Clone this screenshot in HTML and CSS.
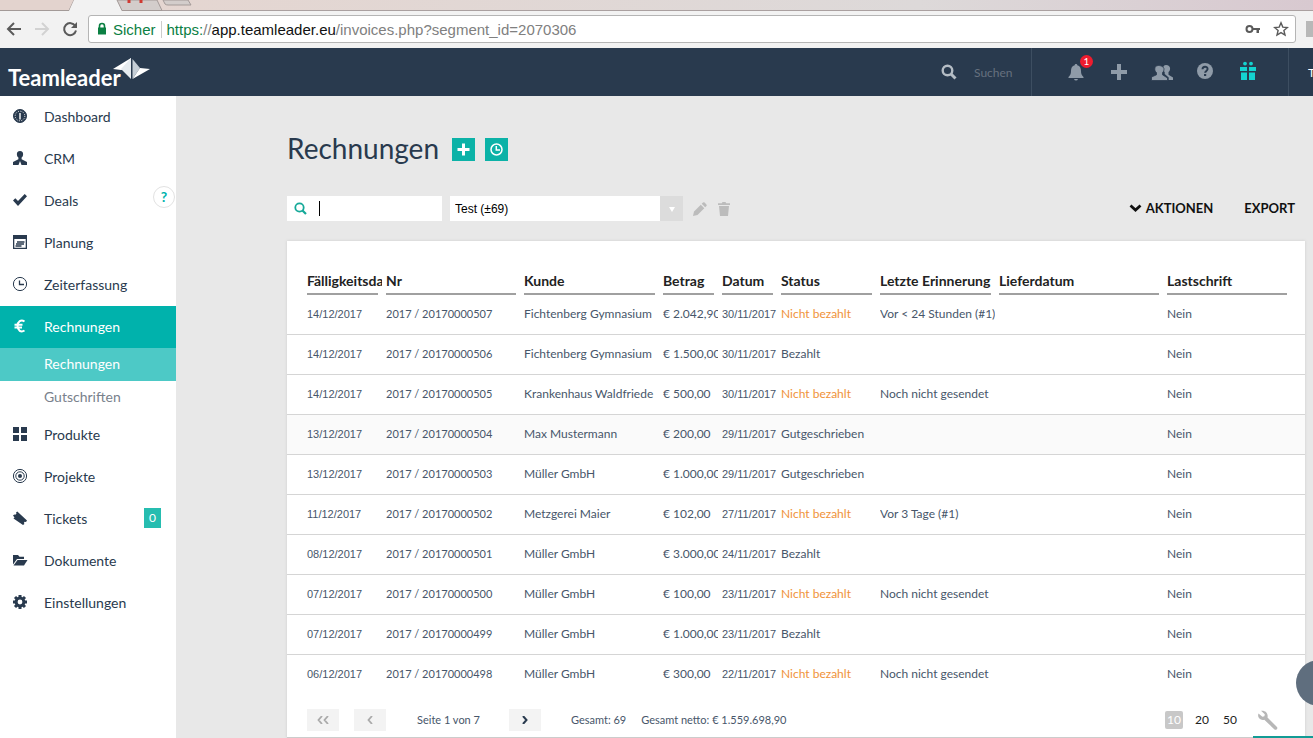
FILE: index.html
```html
<!DOCTYPE html>
<html lang="de">
<head>
    <meta charset="UTF-8">
    <meta name="viewport" content="width=device-width, initial-scale=1.0">
    <title>Rechnungen - Teamleader</title>
    <link rel="stylesheet" href="styles.css">
</head>
<body>
<!-- browser -->
<div class="browser">
    <div class="tabs">
        <svg width="600" height="11" viewBox="0 0 600 11">
            <path d="M0 0H74L69 10.500H0z" fill="#e3d3ce"/>
            <path d="M0 10.500H69L74 0" fill="none" stroke="#a39a98"/>
            <path d="M74 0H117L122 11H69z" fill="#f2f2f2"/>
            <path d="M117 0L122 10.500H162L157 0z" fill="#d3cdcb" stroke="#a39a98"/>
            <path d="M129 0v3M141 0v3" stroke="#d03a32" stroke-width="3"/>
            <path d="M163 0l2 4q1 1 3 1h23l-3-5z" fill="#d3cdcb" stroke="#a39a98"/>
        </svg>
    </div>
    <div class="toolbar">
        <button class="nav-btn" aria-label="Zurück"><svg width="16" height="16" viewBox="0 0 16 16"><path d="M15 8H2M8 2L2 8l6 6" fill="none" stroke="#5a5a5a" stroke-width="2"/></svg></button>
        <button class="nav-btn" aria-label="Vorwärts"><svg width="16" height="16" viewBox="0 0 16 16"><path d="M1 8h13M8 2l6 6-6 6" fill="none" stroke="#d2d2d2" stroke-width="2"/></svg></button>
        <button class="nav-btn" aria-label="Neu laden"><svg width="16" height="16" viewBox="0 0 16 16"><path d="M13.300 5A6 6 0 1 0 14 9.500" fill="none" stroke="#5a5a5a" stroke-width="2"/><path d="M15 1v6H9z" fill="#5a5a5a"/></svg></button>
        <div class="address">
            <svg width="10" height="14" viewBox="0 0 10 14"><path d="M2.500 6V4a2.500 2.500 0 0 1 5 0v2" fill="none" stroke="#0b8043" stroke-width="1.600"/><path d="M1 5.500h8v7H1z" fill="#0b8043"/></svg>
            <span class="secure">Sicher</span>
            <span class="url"><span class="scheme">https:</span>//<b>app.teamleader.eu</b>/invoices.php?segment_id=2070306</span>
            <svg width="16" height="12" viewBox="0 0 16 12"><circle cx="4.500" cy="6" r="3" fill="none" stroke="#5a5a5a" stroke-width="2"/><path d="M7 5h8v2h-1v3h-2.500V7H7z" fill="#5a5a5a"/></svg>
            <svg width="16" height="16" viewBox="0 0 16 16"><path d="M8 1.800l1.800 4.300 4.600.4-3.500 3 1.100 4.600L8 11.600l-4 2.500 1.100-4.600-3.500-3 4.600-.4z" fill="none" stroke="#5a5a5a" stroke-width="1.400"/></svg>
        </div>
        <span class="extension"></span>
    </div>
</div>

<!-- header -->
<header class="header">
    <a class="logo" href="#">Teamleader<svg width="38" height="22" viewBox="0 0 38 22"><path d="M0 11L18 0V11L8 12z" fill="#fff"/><path d="M18 0V21L8 11z" fill="#e6ebef"/><path d="M19.500 1L27 10 19.500 21z" fill="#c5ced6"/><path d="M19.500 21L27 10l10 1z" fill="#fff"/></svg></a>
    <label class="top-search">
        <svg width="16" height="16" viewBox="0 0 16 16"><circle cx="6.500" cy="6.500" r="4.800" fill="none" stroke="#b4bcc4" stroke-width="2.400"/><path d="M10 10l4.500 4.500" stroke="#b4bcc4" stroke-width="3"/></svg>
        <input type="text" placeholder="Suchen">
    </label>
    <nav class="top-icons">
        <a href="#" aria-label="Meldungen"><svg width="16" height="18" viewBox="0 0 16 18"><path d="M8 1c1 0 1.300.6 1.300 1.300C12 3 13 5 13 8c0 3 .8 4.500 2.500 6V15H.5v-1C2.200 12.500 3 11 3 8c0-3 1-5 3.700-5.700C6.700 1.600 7 1 8 1z"/><path d="M6 16h4q-.5 1.500-2 1.500T6 16z"/></svg><span class="count">1</span></a>
        <a href="#" aria-label="Neu"><svg width="16" height="16" viewBox="0 0 16 16"><path d="M6 0h4v6h6v4h-6v6H6v-6H0V6h6z"/></svg></a>
        <a href="#" aria-label="Kontakte"><svg width="22" height="17" viewBox="0 0 22 17"><path d="M15 1c-2 0-3 1.500-2.800 3.700.1 1.700.8 2.700 1.500 3.300v2l4 3.500V16H22v-2.500l-4.500-2.700V8c.9-.7 1.500-1.800 1.600-3.300C19.300 2.500 17.300 1 15 1z"/><path d="M7.500 1.500C5 1.500 3.600 3 3.800 5.300c.1 1.600.8 2.700 1.700 3.300v2.200L.5 13v3.500h16V14l-5-3.200V8.600c.8-.6 1.400-1.700 1.500-3.300C13.200 3 10 1.500 7.500 1.500z" stroke="#293a4e" stroke-width=".8"/></svg></a>
        <a class="up" href="#" aria-label="Hilfe"><svg width="16" height="16" viewBox="0 0 16 16"><circle cx="8" cy="8" r="8"/><path d="M5.500 6.200C5.500 3 10.600 3 10.600 6c0 1.800-2.500 2-2.500 3.800" fill="none" stroke="#293a4e" stroke-width="1.900"/><path d="M7 11h2.200v2H7z" fill="#293a4e"/></svg></a>
        <a class="gift up" href="#" aria-label="Neuigkeiten"><svg width="16" height="19" viewBox="0 0 16 19"><circle cx="5" cy="2.600" r="1.900"/><circle cx="11" cy="2.600" r="1.900"/><path d="M0 6h7v4H0zM9 6h7v4H9zM1 11.500h6V19H1zM9 11.500h6V19H9z"/></svg></a>
    </nav>
    <a class="user" href="#">T</a>
</header>

<div class="page">
    <!-- menu -->
    <nav class="sidebar">
        <a href="#"><svg width="16" height="16" viewBox="0 0 16 16"><circle cx="8" cy="8" r="6.500" fill="#293a4e" stroke="#293a4e"/><circle cx="8" cy="8" r="4.800" fill="none" stroke="#fff" stroke-width="1" stroke-dasharray="1 1.500"/><path d="M7.300 5h1.400v6.500H7.300z" fill="#fff"/></svg>Dashboard</a>
        <a href="#"><svg width="16" height="16" viewBox="0 0 16 16"><path d="M8 1C5.800 1 4.700 2.500 4.900 4.500c.1 1.500.7 2.500 1.500 3.100v1.600L1 12v3h5.500L8 11l1.500 4H15v-3L9.600 9.200V7.600c.8-.6 1.400-1.600 1.500-3.100C11.300 2.500 10.200 1 8 1z"/></svg>CRM</a>
        <a href="#"><svg width="16" height="16" viewBox="0 0 16 16"><path d="M1 8.500l2.300-2.300L6 9l6.700-7L15 4.300 6 14z"/></svg>Deals<span class="hint">?</span></a>
        <a href="#"><svg width="16" height="16" viewBox="0 0 16 16"><path d="M1 1h14v14H1zM2.300 5v8.700h11.400V5z" fill-rule="evenodd"/><path d="M5 8h7.500M4 10h8M3.500 12h6" stroke="#293a4e" stroke-width="1.300"/></svg>Planung</a>
        <a href="#"><svg width="16" height="16" viewBox="0 0 16 16"><circle cx="8" cy="8" r="6.600" fill="none" stroke="#293a4e" stroke-width="1"/><path d="M7.500 4.500V8.500H12" fill="none" stroke="#293a4e" stroke-width="1.300"/></svg>Zeiterfassung</a>
        <a class="active" href="#"><svg width="16" height="16" viewBox="0 0 16 16"><path d="M12.500 3.500C9 1.200 5.600 3.500 5.600 8s3.400 6.800 6.900 4.500M2.500 6.700h8M2.500 9.500h7.500" fill="none" stroke="#fff" stroke-width="2"/></svg>Rechnungen</a>
        <a class="sub current" href="#">Rechnungen</a>
        <a class="sub" href="#">Gutschriften</a>
        <a href="#"><svg width="16" height="16" viewBox="0 0 16 16"><path d="M1 1h6v6H1zM9 1h6v6H9zM1 9h6v6H1zM9 9h6v6H9z"/></svg>Produkte</a>
        <a href="#"><svg width="16" height="16" viewBox="0 0 16 16"><g fill="none" stroke="#293a4e"><circle cx="8" cy="8" r="6.600"/><circle cx="8" cy="8" r="4.200"/></g><circle cx="8" cy="8" r="2"/></svg>Projekte</a>
        <a href="#"><svg width="16" height="16" viewBox="0 0 16 16"><path d="M1 5.500L2.300 4.500l1 .3L4.500 3.500 4 2.500 5.300 1.500 15 10.500 14 12l-1.300-.2-.8 1 .5 1.300L11 15 1.500 8.500l1-1z"/></svg>Tickets<span class="badge">0</span></a>
        <a href="#"><svg width="16" height="16" viewBox="0 0 16 16"><path d="M1 3h5l1.500 1.700H12V7H5L1 12.500z"/><path d="M5.500 8H15.500L12 13.500H1.500z"/></svg>Dokumente</a>
        <a href="#"><svg width="16" height="16" viewBox="0 0 16 16"><circle cx="8" cy="8" r="3.900" fill="none" stroke="#293a4e" stroke-width="3"/><path d="M8 1v2.500M8 12.500V15M1 8h2.500M12.500 8H15M3 3l1.800 1.800M11.200 11.200L13 13M3 13l1.800-1.800M11.200 4.800L13 3" stroke="#293a4e" stroke-width="3"/></svg>Einstellungen</a>
    </nav>

    <!-- content -->
    <main class="content">
        <div class="title">
            <h1>Rechnungen</h1>
            <button aria-label="Neue Rechnung"><svg width="13" height="13" viewBox="0 0 13 13"><path d="M5 .5h3V5h4.500v3H8v4.500H5V8H.5V5H5z" fill="#fff"/></svg></button>
            <button aria-label="Verlauf"><svg width="13" height="13" viewBox="0 0 13 13"><circle cx="6.500" cy="6.500" r="5.500" fill="none" stroke="#fff" stroke-width="1.500"/><path d="M6.300 3v4H10" fill="none" stroke="#fff" stroke-width="1.500"/></svg></button>
        </div>

        <div class="filter">
            <label class="search">
                <svg width="13" height="13" viewBox="0 0 13 13"><circle cx="5.500" cy="5.500" r="4.200" fill="none" stroke="#15a999" stroke-width="1.800"/><path d="M8.500 8.500l3.500 3.500" stroke="#15a999" stroke-width="2.200"/></svg>
                <span class="caret"></span>
                <input type="text" aria-label="Rechnungen suchen">
            </label>
            <div class="segment">
                <select aria-label="Segment"><option>Test (±69)</option></select>
            </div>
            <button class="tool" aria-label="Bearbeiten"><svg width="14" height="14" viewBox="0 0 14 14"><path d="M0 14l1-4.500L7.800 2.700l3.500 3.500L4.500 13zM8.700 1.800L10 .6q.8-.7 1.600 0l1.800 1.800q.7.800 0 1.600L12.200 5.300z"/></svg></button>
            <button class="tool" aria-label="Löschen"><svg width="12" height="14" viewBox="0 0 12 14"><path d="M0 1.200h3.800L4.500 0h3l.7 1.200H12V3H0zM1 4h10l-1 10H2z"/></svg></button>
            <button class="action first"><svg width="13" height="10" viewBox="0 0 13 10"><path d="M1.500 2.500l5 4.500 5-4.500" fill="none" stroke="#111" stroke-width="2.800"/></svg>AKTIONEN</button>
            <button class="action">EXPORT</button>
        </div>

        <section class="panel">
            <table>
                <colgroup>
                    <col class="due"><col class="nr"><col class="customer"><col class="amount"><col class="date"><col class="status"><col class="reminder"><col class="delivery"><col class="debit">
                </colgroup>
                <thead>
                    <tr><th>Fälligkeitsdatum</th><th>Nr</th><th>Kunde</th><th>Betrag</th><th>Datum</th><th>Status</th><th>Letzte Erinnerung</th><th>Lieferdatum</th><th>Lastschrift</th></tr>
                </thead>
                <tbody>
                    <tr><td class="day">14/12/2017</td><td class="num">2017 / 20170000507</td><td>Fichtenberg Gymnasium</td><td>€ 2.042,90</td><td class="day">30/11/2017</td><td class="open">Nicht bezahlt</td><td>Vor &lt; 24 Stunden (#1)</td><td></td><td>Nein</td></tr>
                    <tr><td class="day">14/12/2017</td><td class="num">2017 / 20170000506</td><td>Fichtenberg Gymnasium</td><td>€ 1.500,00</td><td class="day">30/11/2017</td><td>Bezahlt</td><td></td><td></td><td>Nein</td></tr>
                    <tr><td class="day">14/12/2017</td><td class="num">2017 / 20170000505</td><td>Krankenhaus Waldfriede</td><td>€ 500,00</td><td class="day">30/11/2017</td><td class="open">Nicht bezahlt</td><td>Noch nicht gesendet</td><td></td><td>Nein</td></tr>
                    <tr class="hover"><td class="day">13/12/2017</td><td class="num">2017 / 20170000504</td><td>Max Mustermann</td><td>€ 200,00</td><td class="day">29/11/2017</td><td>Gutgeschrieben</td><td></td><td></td><td>Nein</td></tr>
                    <tr><td class="day">13/12/2017</td><td class="num">2017 / 20170000503</td><td>Müller GmbH</td><td>€ 1.000,00</td><td class="day">29/11/2017</td><td>Gutgeschrieben</td><td></td><td></td><td>Nein</td></tr>
                    <tr><td class="day">11/12/2017</td><td class="num">2017 / 20170000502</td><td>Metzgerei Maier</td><td>€ 102,00</td><td class="day">27/11/2017</td><td class="open">Nicht bezahlt</td><td>Vor 3 Tage (#1)</td><td></td><td>Nein</td></tr>
                    <tr><td class="day">08/12/2017</td><td class="num">2017 / 20170000501</td><td>Müller GmbH</td><td>€ 3.000,00</td><td class="day">24/11/2017</td><td>Bezahlt</td><td></td><td></td><td>Nein</td></tr>
                    <tr><td class="day">07/12/2017</td><td class="num">2017 / 20170000500</td><td>Müller GmbH</td><td>€ 100,00</td><td class="day">23/11/2017</td><td class="open">Nicht bezahlt</td><td>Noch nicht gesendet</td><td></td><td>Nein</td></tr>
                    <tr><td class="day">07/12/2017</td><td class="num">2017 / 20170000499</td><td>Müller GmbH</td><td>€ 1.000,00</td><td class="day">23/11/2017</td><td>Bezahlt</td><td></td><td></td><td>Nein</td></tr>
                    <tr><td class="day">06/12/2017</td><td class="num">2017 / 20170000498</td><td>Müller GmbH</td><td>€ 300,00</td><td class="day">22/11/2017</td><td class="open">Nicht bezahlt</td><td>Noch nicht gesendet</td><td></td><td>Nein</td></tr>
                </tbody>
            </table>

            <!-- paging -->
            <div class="paging">
                <button aria-label="Erste Seite"><svg width="12" height="8" viewBox="0 0 12 8"><path d="M5 0L1.500 4 5 8M11 0L7.500 4 11 8" fill="none" stroke="#aaa" stroke-width="1.800"/></svg></button>
                <button aria-label="Vorige Seite"><svg width="6" height="8" viewBox="0 0 6 8"><path d="M5 0L1.500 4 5 8" fill="none" stroke="#aaa" stroke-width="1.800"/></svg></button>
                <span class="position">Seite 1 von 7</span>
                <button aria-label="Nächste Seite"><svg width="6" height="8" viewBox="0 0 6 8"><path d="M1 0l3.500 4L1 8" fill="none" stroke="#293a4e" stroke-width="2"/></svg></button>
                <span class="total">Gesamt: 69</span>
                <span>Gesamt netto: € 1.559.698,90</span>
                <div class="sizes">
                    <a class="selected" href="#">10</a>
                    <a href="#">20</a>
                    <a href="#">50</a>
                </div>
                <button class="wrench" aria-label="Spalten anpassen"><svg width="22" height="20" viewBox="0 0 22 20"><path d="M4 .8l3.800 3.400-.4 2-2 .6L1.500 3.500C0 6.800 3 11 7.300 9.800L17.500 19.500q1.300.8 2.300-.2t.2-2.300L10.500 7.500C11.500 3 8 0 4 .8z" fill="#b7b7b7"/></svg></button>
            </div>
        </section>
    </main>
</div>
<button class="chat" aria-label="Chat"></button>
<div class="progress"></div>
</body>
</html>
```
FILE: styles.css
```css
*{
    box-sizing: border-box;
    margin: 0;
    padding: 0;
}
body{
    display: flex;
    flex-direction: column;
    height: 100vh;
    overflow: hidden;
    background: #e8e8e8;
    color: #47566a;
    font-family: Lato, "Open Sans", sans-serif;
    font-size: 12px;
}
a{
    color: inherit;
    text-decoration: none;
}
button, input, select{
    border: 0;
    outline: 0;
    background: none;
    font-family: inherit;
}
svg{
    display: block;
    flex: none;
}

/* browser */
.browser{
    flex: none;
    background: #f2f2f2;
    font-family: "Liberation Sans", Arial, sans-serif;
}
.tabs{
    height: 11px;
    border-bottom: 1px solid #aaa0a0;
    background: linear-gradient(to right, #e6d5cf, #ddd9d9 70%, #d8c9d0);
}
.toolbar{
    display: flex;
    align-items: center;
    height: 37px;
    padding: 0 0 1px 6px;
}
.nav-btn{
    width: 16px;
    margin-right: 12px;
}
.address{
    display: flex;
    flex: 1;
    align-items: center;
    height: 28px;
    margin-left: -2px;
    padding: 0 6px 0 8px;
    border: 1px solid #b5b5b5;
    border-radius: 3px;
    background: #fff;
    color: #808080;
    font-size: 15px;
}
.address svg + svg{
    margin-left: 12px;
}
.secure{
    margin: 0 5px 0 6px;
    padding-right: 5px;
    border-right: 1px solid #ccc;
    color: #0b8043;
}
.url{
    flex: 1;
}
.url b{
    color: #111;
    font-weight: normal;
}
.scheme{
    color: #0b8043;
}
.extension{
    width: 7px;
    height: 16px;
    margin-left: 10px;
    background: #b8b8b8;
}

/* header */
.header{
    display: flex;
    flex: none;
    align-items: center;
    height: 48px;
    background: #293a4e;
}
.logo{
    display: flex;
    flex: 1;
    align-items: flex-end;
    padding: 5px 0 0 8px;
    color: #fff;
    font-size: 22px;
    font-weight: bold;
    line-height: 28px;
}
.logo svg{
    margin: 0 0 12px -8px;
}
.top-search{
    display: flex;
    align-items: center;
    gap: 17px;
}
.top-search input{
    width: 57px;
    font-size: 12px;
}
.top-search input::placeholder{
    color: #66717f;
}
.top-icons{
    display: flex;
    height: 100%;
    padding: 0 19px 0 22px;
    border: solid #3d4e61;
    border-width: 0 1px;
}
.top-icons a{
    position: relative;
    display: flex;
    align-items: center;
    justify-content: center;
    width: 43px;
    fill: #8f9ba8;
}
.top-icons .up{
    padding-bottom: 3px;
}
.top-icons .gift{
    fill: #14d2d0;
}
.count{
    position: absolute;
    top: 7px;
    right: 4px;
    width: 13px;
    border-radius: 50%;
    background: #ee1c2e;
    color: #fff;
    font-size: 10px;
    line-height: 13px;
    text-align: center;
}
.user{
    width: 24px;
    padding-left: 19px;
    overflow: hidden;
    color: #fff;
}

/* menu */
.page{
    display: flex;
    flex: 1;
}
.sidebar{
    width: 176px;
    flex: none;
    background: #fff;
    color: #293a4e;
    font-size: 14px;
}
.sidebar a{
    display: flex;
    position: relative;
    align-items: center;
    gap: 16px;
    height: 42px;
    padding: 0 15px 2px 12px;
    fill: #293a4e;
}
.sidebar .active{
    background: #00b2ac;
    color: #fff;
}
.sidebar .sub{
    height: 33px;
    padding-left: 44px;
    color: #79818c;
}
.sidebar .current{
    background: #4dc9c6;
    color: #fff;
}
.badge{
    width: 17px;
    margin-left: auto;
    background: #26bdb0;
    color: #fff;
    font-size: 12px;
    line-height: 20px;
    text-align: center;
}
.hint{
    position: absolute;
    top: 6px;
    right: 1px;
    width: 22px;
    border: 1px solid #e2e2e2;
    border-radius: 50%;
    color: #00b2ac;
    font-weight: bold;
    line-height: 20px;
    text-align: center;
}

/* content */
.content{
    flex: 1;
    min-width: 0;
    padding: 36px 8px 0 111px;
}
.title{
    display: flex;
    align-items: center;
    gap: 10px;
    height: 34px;
}
h1{
    padding: 0 3px 2px 0;
    color: #293a4e;
    font-size: 28px;
    font-weight: normal;
}
.title button{
    display: flex;
    align-items: center;
    justify-content: center;
    width: 23px;
    height: 23px;
    background: #0cb2a7;
}
.filter{
    display: flex;
    align-items: center;
    margin: 30px 0 20px;
}
.search{
    display: flex;
    align-items: center;
    width: 155px;
    height: 25px;
    margin-right: 8px;
    padding-left: 7px;
    background: #fff;
}
.search input{
    width: 100%;
    min-width: 0;
}
.caret{
    flex: none;
    width: 1px;
    height: 15px;
    margin-left: 12px;
    background: #000;
}
.segment{
    position: relative;
    width: 233px;
    margin-right: 10px;
}
.segment select{
    appearance: none;
    width: 100%;
    height: 25px;
    padding: 0 28px 0 5px;
    border-right: 23px solid #dcdcdc;
    background: #fff;
    color: #000;
    font-family: "Liberation Sans", Arial, sans-serif;
    font-size: 12px;
}
.segment::after{
    content: "";
    position: absolute;
    top: 11px;
    right: 8px;
    border: solid transparent;
    border-width: 5px 3px 0;
    border-top-color: #fff;
    pointer-events: none;
}
.tool{
    margin-right: 11px;
    fill: #bcbcbc;
}
.action{
    display: flex;
    align-items: center;
    gap: 4px;
    margin-right: 10px;
    padding-bottom: 2px;
    color: #111;
    font-size: 13px;
    font-weight: bold;
}
.first{
    margin: 0 31px 0 auto;
}
.panel{
    padding-top: 32px;
    background: #fff;
    box-shadow: 0 0 3px #ccc;
}
table{
    width: 100%;
    border-spacing: 0;
    table-layout: fixed;
}
.due, .status{
    width: 99px;
}
.nr{
    width: 138px;
}
.customer{
    width: 139px;
}
.amount, .date{
    width: 59px;
}
.reminder{
    width: 119px;
}
.delivery{
    width: 168px;
}
/* the clear border cuts long values before the next column */
th, td{
    border-right: 4px solid transparent;
    overflow: hidden;
    text-align: left;
    white-space: nowrap;
}
th:first-child, td:first-child{
    padding-left: 20px;
}
th:last-child, td:last-child{
    padding-right: 10px;
}
th{
    color: #222;
    font-size: 14px;
    line-height: 16px;
}
th::after{
    content: "";
    display: block;
    height: 2px;
    margin: 4px 4px 0 0;
    background: #a0a0a0;
}
td{
    height: 40px;
    padding-bottom: 3px;
}
tbody tr{
    background: linear-gradient(#d5d5d5, #d5d5d5) bottom / 100% 1px no-repeat;
}
tbody tr:last-child{
    background: none;
}
tbody .hover{
    background-color: #fafafa;
}
.num{
    font-size: 11px;
}
.day{
    font-family: "Liberation Sans", Arial, sans-serif;
    font-size: 11px;
}
.open{
    color: #f0923a;
}
.paging{
    display: flex;
    align-items: center;
    height: 43px;
    padding: 7px 26px 0 20px;
    border-bottom: 1px solid #ccc;
    font-size: 11px;
}
.paging button{
    display: flex;
    align-items: center;
    justify-content: center;
    width: 32px;
    height: 22px;
    margin-right: 15px;
    background: #f3f3f3;
}
.position{
    margin: 0 29px 0 16px;
}
.total{
    margin: 0 15px;
}
.sizes{
    display: flex;
    gap: 10px;
    margin-left: auto;
    color: #222;
    font-size: 12px;
    line-height: 18px;
    text-align: center;
}
.sizes a{
    width: 18px;
}
.sizes .selected{
    border-radius: 2px;
    background: #c8c8c8;
    color: #fff;
}
.paging .wrench{
    width: 22px;
    margin: 0 0 0 18px;
    background: none;
}

/* overlay */
.chat{
    position: fixed;
    right: -29px;
    bottom: 32px;
    width: 46px;
    height: 46px;
    border-radius: 50%;
    background: #5f6e7e;
}
.progress{
    position: fixed;
    right: 0;
    bottom: 0;
    width: 60px;
    height: 2px;
    background: #139c96;
}
```
